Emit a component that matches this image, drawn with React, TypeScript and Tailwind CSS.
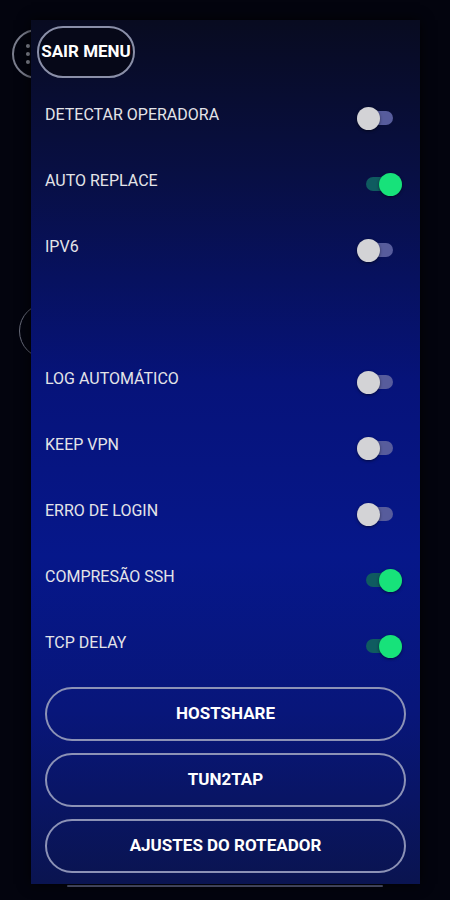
import React from 'react';

type ToggleRowProps = {
  label: string;
  on?: boolean;
};

const Toggle: React.FC<{ on?: boolean }> = ({ on }) => {
  return (
    <div className="relative w-[45px] h-[22px] mt-[6px] shrink-0">
      {on ? (
        <>
          <div className="absolute right-0 top-[4px] w-[36px] h-[14px] rounded-full bg-[#0f5b60]" />
          <div className="absolute right-0 top-0 w-[23px] h-[23px] rounded-full bg-[#17e27a] shadow-[0_1px_3px_rgba(0,0,0,0.5)]" />
        </>
      ) : (
        <>
          <div className="absolute left-0 top-[4px] w-[36px] h-[14px] rounded-full bg-[#575c9c]" />
          <div className="absolute left-0 top-0 w-[23px] h-[23px] rounded-full bg-[#d3d3d6] shadow-[0_1px_3px_rgba(0,0,0,0.5)]" />
        </>
      )}
    </div>
  );
};

const ToggleRow: React.FC<ToggleRowProps> = ({ label, on }) => {
  return (
    <div className="h-[66px] flex items-center justify-between pl-[14px] pr-[18px]">
      <span className="text-[16px] text-[#e4e4e8]">{label}</span>
      <Toggle on={on} />
    </div>
  );
};

const PillButton: React.FC<{ text: string }> = ({ text }) => {
  return (
    <div className="h-[54px] rounded-full border-2 border-[#8c92b6] flex items-center justify-center">
      <span className="text-[17px] font-bold text-white">{text}</span>
    </div>
  );
};

export default function App() {
  return (
    <div
      className="relative w-[450px] h-[900px] overflow-hidden bg-[#03040e]"
      style={{ fontFamily: 'Roboto, "Liberation Sans", sans-serif' }}
    >
      {/* round buttons behind the drawer */}
      <div className="absolute left-[12px] top-[29px] w-[50px] h-[50px] rounded-full border-2 border-[#7a7d8c]" />
      <div className="absolute left-[26px] top-[44px] flex flex-col gap-[4px]">
        <div className="w-[4px] h-[4px] rounded-full bg-[#8a8d99]" />
        <div className="w-[4px] h-[4px] rounded-full bg-[#8a8d99]" />
        <div className="w-[4px] h-[4px] rounded-full bg-[#8a8d99]" />
      </div>
      <div className="absolute left-[19px] top-[303px] w-[56px] h-[56px] rounded-full border-[1.5px] border-[#6a6d7c]" />

      {/* drawer */}
      <div className="relative ml-[31px] mt-[20px] w-[389px] h-[864px] overflow-hidden bg-[linear-gradient(180deg,#080b20_0%,#080f44_18%,#06137a_42%,#06178a_62%,#08167a_80%,#0a1450_100%)] shadow-[0_0_12px_rgba(0,0,0,0.8)]">
        <div className="pt-[6px] pl-[6px]">
          <div className="w-[98px] h-[52px] rounded-full border-2 border-[#8a8fa8] bg-[#060818] flex items-center justify-center">
            <span className="text-[17px] font-bold text-white whitespace-nowrap">SAIR MENU</span>
          </div>
        </div>

        <div className="mt-[4px]">
          <ToggleRow label="DETECTAR OPERADORA" />
          <ToggleRow label="AUTO REPLACE" on />
          <ToggleRow label="IPV6" />
          <div className="h-[66px]" />
          <ToggleRow label="LOG AUTOMÁTICO" />
          <ToggleRow label="KEEP VPN" />
          <ToggleRow label="ERRO DE LOGIN" />
          <ToggleRow label="COMPRESÃO SSH" on />
          <ToggleRow label="TCP DELAY" on />
        </div>

        <div className="mt-[11px] px-[14px] flex flex-col gap-[12px]">
          <PillButton text="HOSTSHARE" />
          <PillButton text="TUN2TAP" />
          <PillButton text="AJUSTES DO ROTEADOR" />
        </div>
      </div>

      {/* top edge of the next button, peeking under the drawer */}
      <div className="ml-[67px] mt-[1px] w-[316px] h-[2px] rounded-full bg-[#5a5f80]" />
    </div>
  );
}
